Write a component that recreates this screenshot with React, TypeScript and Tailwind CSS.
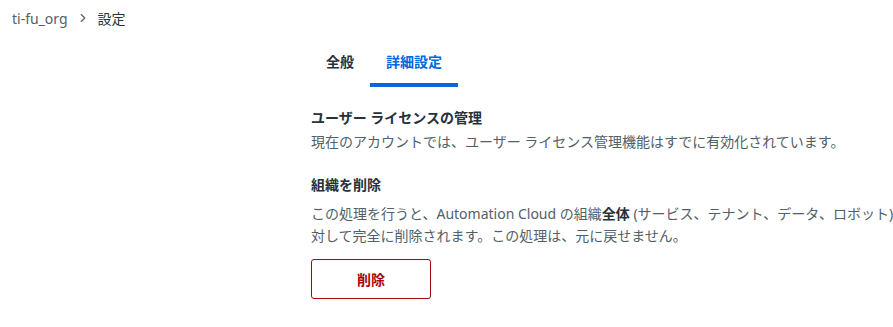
import { ChevronRight } from 'lucide-react'

export default function App() {
  return (
    <div
      className="w-[893px] h-[327px] overflow-hidden bg-white text-[#273139]"
      style={{ fontFamily: '"Noto Sans", "Noto Sans CJK JP", sans-serif' }}
    >
      <div className="flex items-center h-[36px] pl-[12px] text-[14px]">
        <span className="text-[#526069]">ti-fu_org</span>
        <ChevronRight className="w-[14px] h-[14px] mx-[8px] text-[#526069]" strokeWidth={2} />
        <span className="text-[#273139]">設定</span>
      </div>

      <div className="ml-[311px] w-[610px]">
        <div className="flex ml-[-1px] mt-[15px]">
          <div className="px-[16px] h-[36px] flex items-start text-[14px] font-bold text-[#273139]">
            全般
          </div>
          <div className="px-[16px] h-[36px] flex items-start text-[14px] font-bold text-[#0067df] border-b-[4px] border-[#0067df]">
            詳細設定
          </div>
        </div>

        <div className="mt-[20px]">
          <h2 className="text-[14px] font-bold leading-[22px] text-[#273139]">ユーザー ライセンスの管理</h2>
          <p className="text-[14px] leading-[22px] mt-[2px] text-[#526069]">
            現在のアカウントでは、ユーザー ライセンス管理機能はすでに有効化されています。
          </p>
        </div>

        <div className="mt-[21px]">
          <h2 className="text-[14px] font-bold leading-[22px] text-[#273139]">組織を削除</h2>
          <p className="text-[14px] leading-[22px] mt-[7px] text-[#526069]">
            この処理を行うと、Automation Cloud の組織<span className="font-bold text-[#273139]">全体</span> (サービス、テナント、データ、ロボット) に対して完全に削除されます。この処理は、元に戻せません。
          </p>
          <button className="mt-[12px] w-[120px] h-[40px] rounded-[3px] border border-[#a6040f] text-[#a6040f] text-[14px] font-bold bg-white">
            削除
          </button>
        </div>
      </div>
    </div>
  )
}
